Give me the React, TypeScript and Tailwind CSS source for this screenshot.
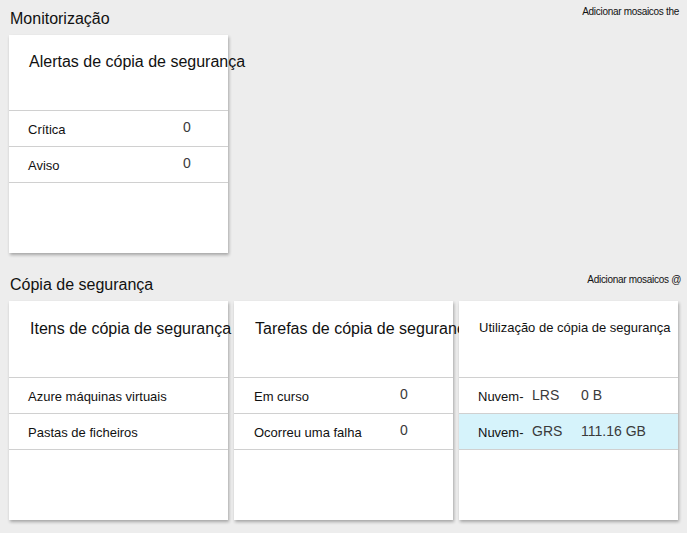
import React from "react";

const font = { fontFamily: '"Liberation Sans", Arial, sans-serif' };

function Row({ children, highlight }: { children: React.ReactNode; highlight?: boolean }) {
  return (
    <div
      className={`h-[36px] border-b border-[#d0d0d0] flex items-center ${highlight ? "bg-[#d6f3fb]" : ""}`}
    >
      {children}
    </div>
  );
}

function Card({
  title,
  titleClass,
  titleTop,
  children,
}: {
  title: string;
  titleClass?: string;
  titleTop: string;
  children: React.ReactNode;
}) {
  return (
    <div className="relative w-[219px] bg-white shadow-[1px_2px_3px_rgba(0,0,0,0.3)] flex flex-col h-full">
      <div className={`border-b border-[#d0d0d0] ${titleTop} whitespace-nowrap`}>
        <div className={titleClass ?? "pl-[20px] text-[16px] leading-[20px] pt-[17px] text-[#111]"}>{title}</div>
      </div>
      {children}
    </div>
  );
}

export default function App() {
  return (
    <div className="w-[687px] h-[533px] bg-[#ededed] overflow-hidden px-[9px]" style={font}>
      {/* Section 1 header */}
      <div className="h-[35px] flex justify-between items-start">
        <div className="pl-[1px] pt-[10px] text-[16px] leading-[18px] text-[#111]">Monitorização</div>
        <div className="pt-[6px] -mr-[1px] text-[10px] leading-[12px] tracking-[-0.3px] text-[#111]">
          Adicionar mosaicos the
        </div>
      </div>
      <div className="h-[218px] flex">
        <Card title="Alertas de cópia de segurança" titleTop="h-[76px]">
          <Row>
            <div className="pl-[19px] w-[174px] text-[13px] text-[#111] pt-[2px]">Crítica</div>
            <div className="text-[14px] text-[#3a3a3a] -mt-[2px]">0</div>
          </Row>
          <Row>
            <div className="pl-[19px] w-[174px] text-[13px] text-[#111] pt-[2px]">Aviso</div>
            <div className="text-[14px] text-[#3a3a3a] -mt-[2px]">0</div>
          </Row>
        </Card>
      </div>
      {/* Section 2 header */}
      <div className="h-[48px] flex justify-between items-start">
        <div className="pl-[1px] pt-[23px] text-[16px] leading-[18px] text-[#111]">Cópia de segurança</div>
        <div className="pt-[21px] -mr-[3px] text-[10px] leading-[12px] tracking-[-0.3px] text-[#111]">
          Adicionar mosaicos @
        </div>
      </div>
      <div className="h-[219px] flex gap-[6px]">
        <Card
          title="Itens de cópia de segurança"
          titleTop="h-[77px]"
          titleClass="pl-[21px] text-[16px] leading-[20px] pt-[18px] text-[#111]"
        >
          <Row>
            <div className="pl-[19px] text-[13px] text-[#111] pt-[2px]">Azure máquinas virtuais</div>
          </Row>
          <Row>
            <div className="pl-[19px] text-[13px] text-[#111] pt-[2px]">Pastas de ficheiros</div>
          </Row>
        </Card>
        <Card
          title="Tarefas de cópia de segurança"
          titleTop="h-[77px]"
          titleClass="pl-[21px] text-[16px] leading-[20px] pt-[18px] text-[#111]"
        >
          <Row>
            <div className="pl-[20px] w-[166px] text-[13px] text-[#111] pt-[2px]">Em curso</div>
            <div className="text-[14px] text-[#3a3a3a] -mt-[2px]">0</div>
          </Row>
          <Row>
            <div className="pl-[20px] w-[166px] text-[13px] text-[#111] pt-[2px]">Ocorreu uma falha</div>
            <div className="text-[14px] text-[#3a3a3a] -mt-[2px]">0</div>
          </Row>
        </Card>
        <Card
          title="Utilização de cópia de segurança"
          titleTop="h-[77px]"
          titleClass="pl-[20px] text-[13px] leading-[18px] pt-[18px] text-[#111]"
        >
          <Row>
            <div className="pl-[19px] w-[73px] text-[13px] text-[#111] pt-[2px]">Nuvem-</div>
            <div className="w-[49px] text-[14px] text-[#3a3a3a]">LRS</div>
            <div className="text-[14px] text-[#3a3a3a]">0 B</div>
          </Row>
          <Row highlight>
            <div className="pl-[19px] w-[73px] text-[13px] text-[#111] pt-[2px]">Nuvem-</div>
            <div className="w-[49px] text-[14px] text-[#3a3a3a]">GRS</div>
            <div className="text-[14px] text-[#3a3a3a]">111.16 GB</div>
          </Row>
        </Card>
      </div>
    </div>
  );
}
